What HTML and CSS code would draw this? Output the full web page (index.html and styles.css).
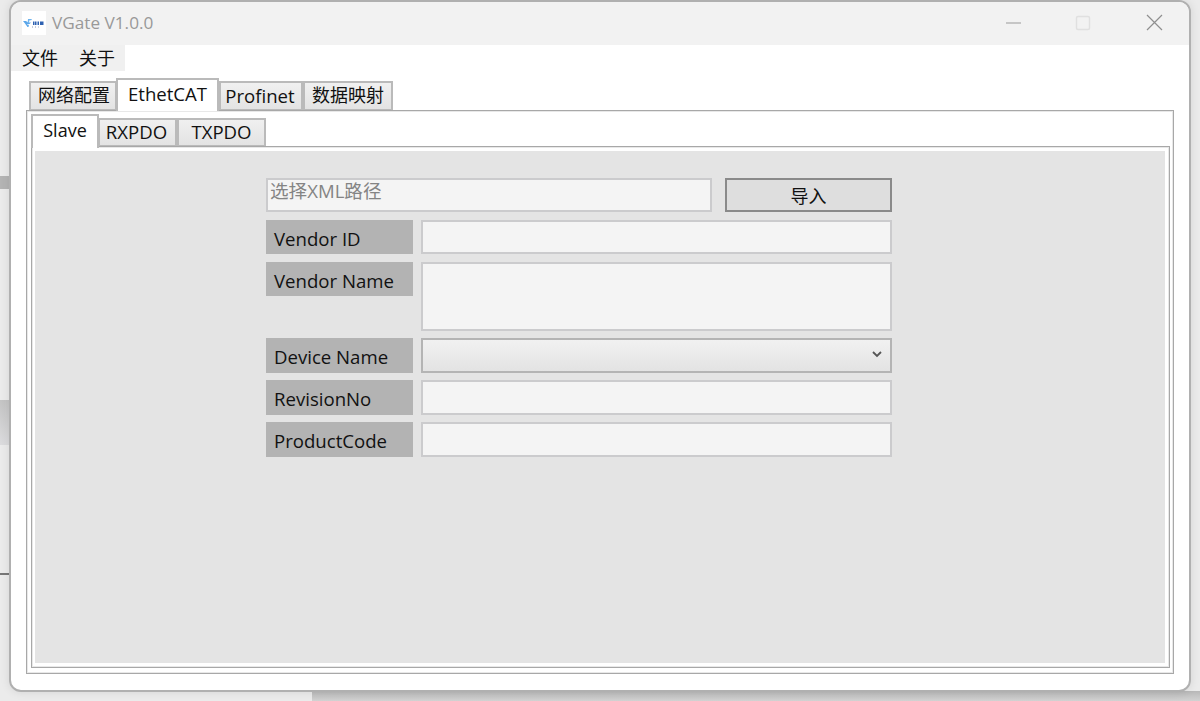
FILE: index.html
```html
<!DOCTYPE html>
<html lang="zh">
<head>
<meta charset="utf-8">
<title>VGate V1.0.0</title>
<link rel="stylesheet" href="styles.css">
</head>
<body>
<div class="desk-line desk-a"></div>
<div class="desk-line desk-b"></div>
<div class="desk-line desk-c"></div>
<div class="desk-line desk-d"></div>
<main class="window">
  <header class="titlebar">
    <div class="logo">
      <svg width="24" height="24" viewBox="0 0 24 24">
        <path d="M1 10h3l2 1.5h3l-1.5 1.5H5l1 1 1-.5-.5 2.5H5.500L3 12.500z" fill="#5aa6ea"/>
        <path d="M6 8h4l-.8 1.200H7.500L6.800 12H5.600z" fill="#6fb4ee"/>
        <rect x="11" y="10.500" width="1.500" height="3.500" fill="#2f62b2"/>
        <rect x="13" y="10.500" width="1.500" height="3.500" fill="#2f62b2"/>
        <rect x="15.500" y="10.500" width="1.500" height="3.500" fill="#2f62b2"/>
        <rect x="18" y="10.500" width="3.500" height="3.500" fill="#2f62b2"/>
        <path d="M10 16h1M13 16h1M16 16h.8" stroke="#8d99b8" stroke-width="1" fill="none"/>
      </svg>
    </div>
    <span class="title">VGate V1.0.0</span>
    <div class="controls">
      <svg class="ctl ctl-min" width="16" height="16" viewBox="0 0 16 16"><path d="M0 8h15" stroke="#9a9a9a" stroke-width="1" fill="none"/></svg>
      <svg class="ctl ctl-max" width="16" height="16" viewBox="0 0 16 16"><rect x="1.500" y="1.500" width="13" height="13" rx="1.500" stroke="#e0e0e0" stroke-width="1.500" fill="none"/></svg>
      <svg class="ctl ctl-close" width="17" height="17" viewBox="0 0 17 17"><path d="M1 1l15 15M16 1L1 16" stroke="#8f8f8f" stroke-width="1.200" fill="none"/></svg>
    </div>
  </header>
  <nav class="menubar">
    <span class="menu-item">文件</span>
    <span class="menu-item">关于</span>
  </nav>
  <section class="outer-tabs">
    <div class="tabrow outer-row">
      <span class="tab t1">网络配置</span>
      <span class="tab t2 active">EthetCAT</span>
      <span class="tab t3">Profinet</span>
      <span class="tab t4">数据映射</span>
    </div>
    <div class="pane outer-pane">
      <div class="tabrow inner-row">
        <span class="tab i1 active">Slave</span>
        <span class="tab i2">RXPDO</span>
        <span class="tab i3">TXPDO</span>
      </div>
      <div class="pane inner-pane">
        <div class="content">
          <div class="form">
            <div class="row">
              <div class="field path">选择XML路径</div>
              <button class="import">导入</button>
            </div>
            <div class="row">
              <div class="label">Vendor ID</div>
              <div class="field grow"></div>
            </div>
            <div class="row tall">
              <div class="label">Vendor Name</div>
              <div class="field grow area"></div>
            </div>
            <div class="row r-combo">
              <div class="label">Device Name</div>
              <div class="combo grow">
                <svg width="10" height="7" viewBox="0 0 10 7"><path d="M1 1l4 4 4-4" stroke="#555" stroke-width="1.800" fill="none"/></svg>
              </div>
            </div>
            <div class="row r-combo">
              <div class="label">RevisionNo</div>
              <div class="field grow"></div>
            </div>
            <div class="row r-combo">
              <div class="label">ProductCode</div>
              <div class="field grow"></div>
            </div>
          </div>
        </div>
      </div>
    </div>
  </section>
</main>
</body>
</html>
```
FILE: styles.css
```css
* { box-sizing: border-box; }
html, body { margin: 0; height: 100%; }
body {
  position: relative;
  width: 1200px;
  height: 701px;
  overflow: hidden;
  background: #ebebeb;
  font-family: "Open Sans", "Noto Sans CJK SC", sans-serif;
  font-size: 18px;
  color: #111;
}
.desk-line { position: absolute; left: 0; width: 10px; }
.desk-a { top: 176px; height: 13px; background: #b4b4b4; }
.desk-b { top: 400px; height: 45px; background: linear-gradient(#c4c4c4, #dcdcde); }
.desk-c { top: 573px; height: 2px; background: #777; }
.desk-d { left: 312px; width: 888px; top: 691px; height: 10px; background: linear-gradient(#b8b8b8, #d2d2d2); }

.window {
  position: absolute;
  left: 9px;
  top: 0;
  width: 1182px;
  height: 692px;
  background: #fff;
  border: 2px solid #b0b0b0;
  border-radius: 12px;
  overflow: hidden;
  display: flex;
  flex-direction: column;
  box-shadow: 0 0 10px rgba(0, 0, 0, .1);
}
.titlebar {
  height: 43px;
  flex: none;
  background: #f2f2f2;
  display: flex;
  align-items: center;
  padding: 0 0 2px 11px;
}
.logo { width: 24px; height: 24px; background: #fff; flex: none; }
.logo svg { display: block; }
.title { margin-left: 6px; color: #999; line-height: 24px; font-size: 17.200px; }
.controls { margin-left: auto; display: flex; align-items: center; }
.ctl { display: block; flex: none; }
.ctl-min { margin-right: 53px; }
.ctl-max { margin-right: 55px; }
.ctl-close { margin-right: 26px; }

.menubar {
  width: 114px;
  height: 26px;
  flex: none;
  background: #f0f0f0;
  display: flex;
  gap: 21px;
  padding-left: 11px;
  line-height: 26px;
}
.outer-tabs {
  flex: none;
  padding: 7px 0 0 15px;
  width: 1164px;
}
.tabrow { display: flex; align-items: flex-end; position: relative; z-index: 1; }
.outer-row { height: 33px; padding-left: 3px; margin-bottom: -1px; }
.tab {
  height: 29px;
  margin-bottom: 1px;
  border: 2px solid #bababa;
  border-bottom-width: 1px;
  background: linear-gradient(#f0f0f0, #e3e3e3);
  text-align: center;
  line-height: 25px;
  white-space: nowrap;
  color: #111;
  font-size: 18.600px;
}
.t1, .t4 { font-size: 18px; }
.tab.active {
  height: 33px;
  margin-bottom: 0;
  background: #fff;
  border-bottom: 0;
  line-height: 28px;
}
.t1 { width: 88px; padding-left: 2px; }
.t2 { width: 103px; margin-left: -1px; }
.t3 { width: 84px; padding-right: 2px; }
.t4 { width: 90px; }
.pane { border: 1px solid #a8a8a8; background: #fff; box-shadow: inset 0 0 0 1px #e8e8e8; }
.outer-pane {
  width: 1148px;
  height: 564px;
  padding: 3px 4px 5px 4px;
}
.inner-row { height: 34px; margin-bottom: -2px; }
.inner-row .tab { height: 28px; margin-bottom: 2px; line-height: 24px; }
.inner-row .tab.active { height: 34px; margin-bottom: 0; line-height: 29px; font-size: 18px; }
.i1 { width: 68px; }
.i2 { width: 79px; margin-left: -1px; padding-right: 2px; }
.i3 { width: 89px; }
.inner-pane {
  width: 1139px;
  height: 522px;
  padding: 4px 4px 4px 3px;
}
.content {
  height: 512px;
  background: #e4e4e4;
  padding: 27px 0 0 231px;
}
.form { width: 626px; display: flex; flex-direction: column; gap: 8px; }
.row { display: flex; height: 34px; gap: 8px; align-items: flex-start; font-size: 18.600px; }
.tall { height: 69px; }
.r-combo { height: 35px; margin-top: -1px; }
.row:first-child { gap: 13px; }
.label {
  width: 147px;
  height: 34px;
  flex: none;
  background: #b3b3b3;
  padding-left: 8px;
  line-height: 38px;
}
.r-combo .label { height: 35px; }
.field {
  height: 100%;
  background: #f4f4f4;
  border: 2px solid #cbcbcd;
}
.grow { flex: 1; }
.path {
  width: 446px;
  flex: none;
  color: #848484;
  padding-left: 2px;
  line-height: 22px;
}
.import {
  flex: 1;
  height: 34px;
  margin: 0;
  padding: 0;
  background: #dedede;
  border: 2px solid #8a8a8a;
  font-family: inherit;
  font-size: 18px;
  color: #111;
}
.combo {
  height: 100%;
  background: linear-gradient(#f1f1f1, #e3e3e3);
  border: 2px solid #b4b4b4;
  display: flex;
  align-items: center;
  justify-content: flex-end;
  padding-right: 8px;
}
.combo svg { display: block; margin-top: -2px; }
```
